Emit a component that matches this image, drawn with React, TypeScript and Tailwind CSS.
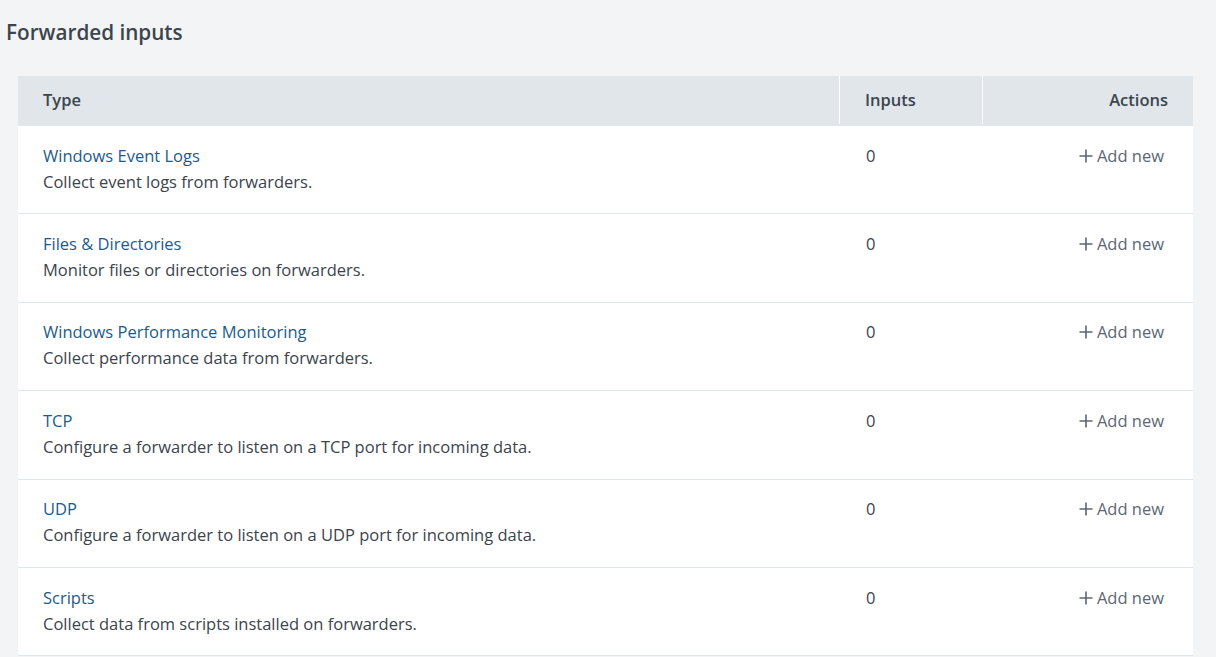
import React from "react";

type Row = { name: string; desc: string; count: number };

const rows: Row[] = [
  { name: "Windows Event Logs", desc: "Collect event logs from forwarders.", count: 0 },
  { name: "Files & Directories", desc: "Monitor files or directories on forwarders.", count: 0 },
  { name: "Windows Performance Monitoring", desc: "Collect performance data from forwarders.", count: 0 },
  { name: "TCP", desc: "Configure a forwarder to listen on a TCP port for incoming data.", count: 0 },
  { name: "UDP", desc: "Configure a forwarder to listen on a UDP port for incoming data.", count: 0 },
  { name: "Scripts", desc: "Collect data from scripts installed on forwarders.", count: 0 },
];

const App: React.FC = () => {
  return (
    <div
      className="w-[1216px] h-[657px] overflow-hidden bg-[#f2f4f5] text-[#3c444d]"
      style={{ fontFamily: "'Open Sans', sans-serif" }}
    >
      {/* Page title */}
      <h1 className="pl-[6px] pt-[18px] text-[20.7px] leading-[29px] font-semibold">Forwarded inputs</h1>

      {/* Table */}
      <div className="ml-[18px] mt-[29px] w-[1175px]">
        <div className="flex h-[50px] bg-[#e1e6eb] text-[16.5px] leading-[24px] font-semibold pb-[2px]">
          <div className="flex items-center w-[822px] pl-[25px] border-r border-white">Type</div>
          <div className="flex items-center w-[143px] pl-[25px] border-r border-white">Inputs</div>
          <div className="flex items-center justify-end flex-1 pr-[25px]">Actions</div>
        </div>

        {rows.map((row) => (
          <div
            key={row.name}
            className="flex items-start bg-white border-b border-[#e1e6eb] pt-[16.7px] pb-[18.7px] text-[16.5px] leading-[26px]"
          >
            <div className="w-[822px] pl-[25px]">
              <a href="#" className="block text-[#1d5b8e]">
                {row.name}
              </a>
              <div>{row.desc}</div>
            </div>
            <div className="w-[143px] pl-[26px]">{row.count}</div>
            <div className="flex-1 flex justify-end pr-[29px]">
              <span className="flex items-center gap-[4px] text-[#5c6773]">
                <svg width="14" height="14" viewBox="0 0 14 14" className="shrink-0">
                  <path d="M7 0.5v13M0.5 7h13" stroke="currentColor" strokeWidth="1.6" />
                </svg>
                Add new
              </span>
            </div>
          </div>
        ))}
      </div>
    </div>
  );
};

export default App;
